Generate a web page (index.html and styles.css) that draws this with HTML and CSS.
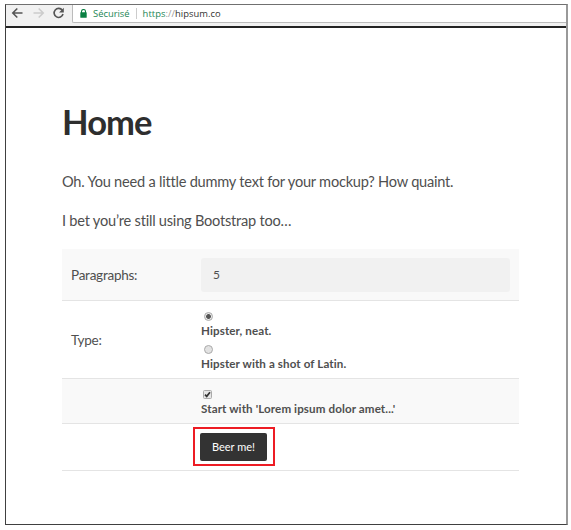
FILE: index.html
```html
<!DOCTYPE html>
<html lang="en">
<head>
<meta charset="utf-8">
<title>Home</title>
<link rel="stylesheet" href="styles.css">
</head>
<body>
<div class="window">
  <header class="toolbar">
    <svg class="nav" width="54" height="14" viewBox="0 0 54 14" fill="none" stroke-width="1.6">
      <path d="M11.5 7H2M6.3 2.5L1.8 7l4.5 4.5" stroke="#555"/>
      <path d="M22.500 7H32M27.700 2.500L32.200 7l-4.500 4.500" stroke="#ccc"/>
      <path d="M51.300 4.300A4.500 4.500 0 1 0 52 8" stroke="#555"/>
      <path d="M52.800 1.800v4.700h-4.700z" fill="#555"/>
    </svg>
    <div class="omnibox">
      <svg class="lock" width="7" height="9" viewBox="0 0 7 9"><path d="M1.500 4V2.500a2 2 0 0 1 4 0V4" fill="none" stroke="#0b8043" stroke-width="1.100"/><rect x=".3" y="3.300" width="6.400" height="5.400" rx=".5" fill="#0b8043"/></svg>
      <span class="secure">Sécurisé</span>
      <span class="divider"></span>
      <span class="url"><span class="scheme">https</span><span class="slashes">://</span>hipsum.co</span>
    </div>
  </header>
  <main class="page">
    <h1><span>Home</span></h1>
    <p><span>Oh. You need a little dummy text for your mockup? How quaint.</span></p>
    <p><span>I bet you’re still using Bootstrap too…</span></p>
    <form class="form">
      <div class="row paragraphs"><div class="label">Paragraphs:</div><div class="field">5</div></div>
      <div class="row type"><div class="label">Type:</div>
        <div class="options">
          <div class="option"><i class="radio checked"></i><b>Hipster, neat.</b></div>
          <div class="option"><i class="radio"></i><b>Hipster with a shot of Latin.</b></div>
        </div>
      </div>
      <div class="row start"><div></div>
        <div class="option"><svg class="check" width="9" height="9" viewBox="0 0 9 9"><rect x=".5" y=".5" width="8" height="8" rx="1" fill="#e6e6e6" stroke="#aaa"/><path d="M2 4.700l1.700 1.700L7 2.300" fill="none" stroke="#333" stroke-width="1.700"/></svg><b>Start with 'Lorem ipsum dolor amet...'</b></div>
      </div>
      <div class="row submit"><div></div><div class="highlight"><button type="button">Beer me!</button></div></div>
    </form>
  </main>
</div>
</body>
</html>
```
FILE: styles.css
```css
* { box-sizing: border-box; }
body { margin: 0; background: #fff; font-family: Lato, sans-serif; color: #4f4f4f; }
.window { width: 563px; height: 521px; margin: 4px 0 0 5px; border: 1px solid #404040; border-top-color: #707070; border-right: 2px solid #999; }
.toolbar { display: flex; height: 23px; background: #f1f1f1; border-bottom: 2px solid #222; }
.nav { margin: 1px 0 0 5px; flex: none; }
.omnibox { display: flex; align-items: center; flex: 1; height: 18px; margin-left: 7px; padding: 0 0 1px 7px; background: #fff; border: 1px solid #bbb; border-width: 0 0 1px 1px; border-radius: 0 0 0 2px; font: 9.4px "Open Sans", sans-serif; color: #333; }
.lock { margin-right: 6px; }
.url { letter-spacing: .05px; }
.secure, .scheme { color: #238655; }
.divider { width: 1px; height: 11px; margin: 0 6px 0 6px; background: #ccc; }
.slashes { color: #999; }
.page { width: 457px; margin: 0 0 0 56px; padding-top: 72px; }
h1 { margin: 0 0 28px; font-size: 34.5px; line-height: 44px; font-weight: 700; letter-spacing: -.9px; color: #2e2e2e; }
p { margin: 0 0 19px; font-size: 14.600px; letter-spacing: -.23px; line-height: 20px; white-space: nowrap; }
.form { margin-top: -1px; }
.row { display: grid; grid-template-columns: 130px 309px; padding: 0 9px; border-bottom: 1px solid #e4e4e4; align-items: center; }
.label { font-size: 13.500px; letter-spacing: -.25px; }
.paragraphs { height: 52px; background: #f9f9f9; }
.field { height: 34px; padding-left: 12px; background: #f1f1f1; border-radius: 3px; font-size: 12px; line-height: 34px; }
.type { height: 78px; }
.options { display: grid; gap: 5px; padding-top: 6px; }
.option { display: flex; flex-direction: column; align-items: flex-start; font-size: 11.600px; letter-spacing: .11px; white-space: nowrap; }
.option b { line-height: 19px; }
.radio { width: 9px; height: 9px; margin-left: 3px; border: 1px solid #aaa; border-radius: 50%; background: #e2e2e2; }
.radio.checked { background: radial-gradient(circle, #555 0 2px, #e8e8e8 2.800px); }
.check { margin-left: 2px; }
.start { height: 45px; padding-top: 5px; background: #f9f9f9; }
.submit { height: 47px; padding-bottom: 2px; }
.highlight { width: 82px; height: 39px; margin-left: -8px; border: 2px solid #ed1c24; padding: 4px 5px; }
button { display: block; width: 67px; height: 28px; padding: 0; border: 0; border-radius: 2px; background: #333; color: #fff; font: 11px Lato, sans-serif; }
```
